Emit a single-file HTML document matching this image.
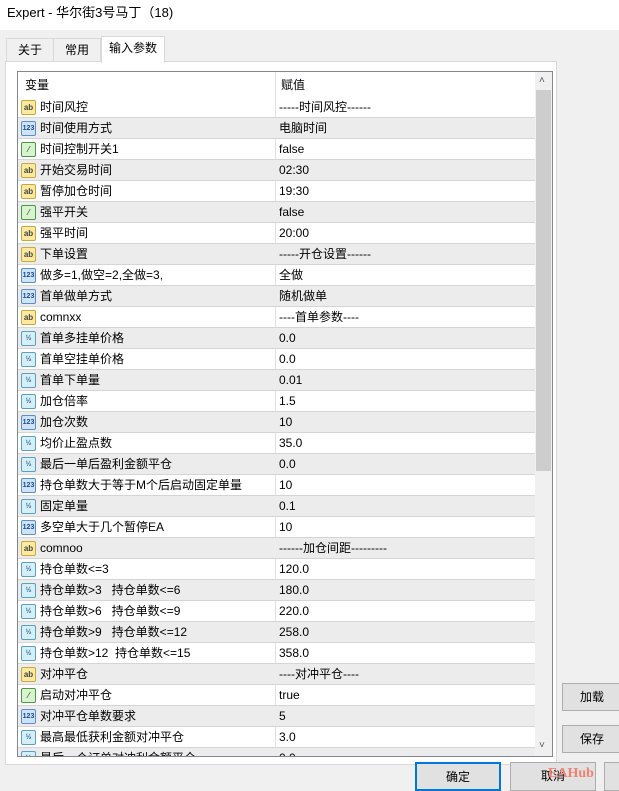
<!DOCTYPE html>
<html><head><meta charset="utf-8"><style>
*{margin:0;padding:0;box-sizing:border-box}
body{width:619px;height:791px;overflow:hidden;background:#f0f0f0;font-family:"Liberation Sans","Noto Sans CJK SC",sans-serif;font-size:12px;color:#000;position:relative}
.title{position:absolute;left:0;top:0;width:619px;height:30px;background:#fff;font-size:13px;line-height:26px;padding-left:7px}
.tab{position:absolute;top:38px;height:24px;border:1px solid #d9d9d9;border-bottom:none;background:#f0f0f0;line-height:22px;text-align:center;font-size:12px}
.panel{position:absolute;left:5px;top:61px;width:552px;height:704px;background:#fff;border:1px solid #d9d9d9}
.list{position:absolute;left:17px;top:71px;width:536px;height:686px;border:1px solid #828790;background:#fff;overflow:hidden}
.hdr{position:absolute;left:0;top:0;width:517px;height:24px;background:#fff}
.hdr span{position:absolute;top:0;line-height:26px}
.row{position:absolute;left:0;width:517px;height:21px;border-bottom:1px solid #d5d5d5}
.row.g{background:#ececec}
.row .n{position:absolute;left:22px;top:0;line-height:20px;white-space:pre}
.row .v{position:absolute;left:261px;top:0;line-height:20px;white-space:pre}
.ic{position:absolute;left:3px;top:3px;width:15px;height:15px;border-radius:2px;font-size:8px;line-height:13px;text-align:center;font-weight:bold;font-family:"Liberation Sans",sans-serif}
.ab{background:#fbe9a0;border:1px solid #c9a83c;color:#444}
.n1{background:#cfe3f8;border:1px solid #5c8fc8;color:#1c4c8c;font-size:7px}
.b{background:#d9f2d2;border:1px solid #4a9a3e;color:#2a7a22}
.f{background:#d6eef6;border:1px solid #5aa0c0;color:#2a6a9a;font-size:7px}
.col{position:absolute;left:257px;top:0;width:1px;height:686px;background:#e0e0e0}
.sb{position:absolute;left:517px;top:0;width:17px;height:684px;background:#f0f0f0}
.thumb{position:absolute;left:1px;top:18px;width:15px;height:381px;background:#cdcdcd}
.btn{position:absolute;background:#e1e1e1;border:1px solid #adadad;text-align:center;font-size:12px;line-height:26px}
</style></head><body>
<div class="title">Expert - 华尔街3号马丁（18)</div>
<div class="tab" style="left:6px;width:48px">关于</div>
<div class="tab" style="left:53px;width:48px">常用</div>
<div class="tab" style="left:101px;top:36px;width:64px;height:27px;background:#fff;z-index:2">输入参数</div>
<div class="panel"></div>
<div class="list">
<div class="hdr"><span style="left:7px">变量</span><span style="left:263px">赋值</span></div>
<div class="col"></div>
<div id="rows"></div>
<div class="sb"><div style="position:absolute;left:4px;top:3px;font-size:10px;color:#555">&#x2c4;</div><div class="thumb"></div><div style="position:absolute;left:4px;top:668px;font-size:10px;color:#555">&#x2c5;</div></div>
</div>
<div class="btn" style="left:562px;top:683px;width:60px;height:28px">加载</div>
<div class="btn" style="left:562px;top:725px;width:60px;height:28px">保存</div>
<div class="btn" style="left:415px;top:762px;width:86px;height:29px;border:2px solid #0078d7">确定</div>
<div class="btn" style="left:510px;top:762px;width:86px;height:29px">取消</div>
<div class="btn" style="left:604px;top:762px;width:30px;height:29px"></div>
<div style="position:absolute;left:548px;top:766px;color:#f08070;font-family:'Liberation Serif',serif;font-size:14px;font-weight:bold">EAHub</div>
<script>
var d=[["ab","时间风控","-----时间风控------"],["n1","时间使用方式","电脑时间"],["b","时间控制开关1","false"],["ab","开始交易时间","02:30"],["ab","暂停加仓时间","19:30"],["b","强平开关","false"],["ab","强平时间","20:00"],["ab","下单设置","-----开仓设置------"],["n1","做多=1,做空=2,全做=3,","全做"],["n1","首单做单方式","随机做单"],["ab","comnxx","----首单参数----"],["f","首单多挂单价格","0.0"],["f","首单空挂单价格","0.0"],["f","首单下单量","0.01"],["f","加仓倍率","1.5"],["n1","加仓次数","10"],["f","均价止盈点数","35.0"],["f","最后一单后盈利金额平仓","0.0"],["n1","持仓单数大于等于M个后启动固定单量","10"],["f","固定单量","0.1"],["n1","多空单大于几个暂停EA","10"],["ab","comnoo","------加仓间距---------"],["f","持仓单数<=3","120.0"],["f","持仓单数>3   持仓单数<=6","180.0"],["f","持仓单数>6   持仓单数<=9","220.0"],["f","持仓单数>9   持仓单数<=12","258.0"],["f","持仓单数>12  持仓单数<=15","358.0"],["ab","对冲平仓","----对冲平仓----"],["b","启动对冲平仓","true"],["n1","对冲平仓单数要求","5"],["f","最高最低获利金额对冲平仓","3.0"],["f","最后一个订单对冲利金额平仓","0.0"]];
var lab={ab:"ab",n1:"123",b:"⁄",f:"½"};var h="";
d.forEach(function(r,i){h+='<div class="row'+(i%2?' g':'')+'" style="top:'+(25+i*21)+'px"><div class="ic '+r[0]+'">'+lab[r[0]]+'</div><span class="n">'+r[1].replace(/</g,"&lt;")+'</span><span class="v">'+r[2]+'</span></div>';});
document.getElementById("rows").innerHTML=h;
</script>
</body></html>
